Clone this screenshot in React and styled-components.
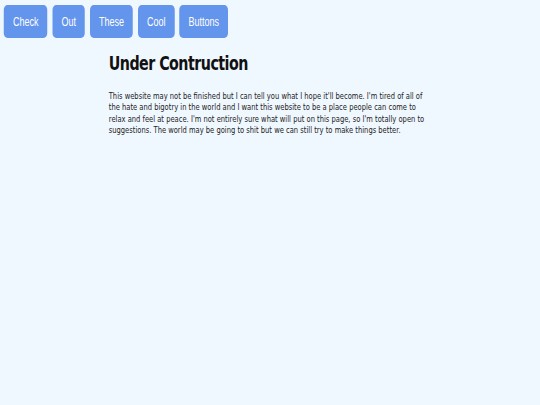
import styled, { createGlobalStyle } from "styled-components";

const GlobalStyle = createGlobalStyle`
    html, body {
        margin: 0;
        padding: 0;
        background-color: #f0f8ff;
        overflow: hidden;
    }
    body {
        min-height: 100vh;
    }
`;

const links = ["Check", "Out", "These", "Cool", "Buttons"];

export default function App() {
    return (
        <>
            <GlobalStyle />
            <SPage>
                <SNav>
                    {links.map((l) => (
                        <SButton key={l}>{l}</SButton>
                    ))}
                </SNav>
                <SMain>
                    <STitle>Under Contruction</STitle>
                    <SText>
                        This website may not be finished but I can tell you what I hope it'll become. I'm tired of all of
                        the hate and bigotry in the world and I want this website to be a place people can come to
                        relax and feel at peace. I'm not entirely sure what will put on this page, so I'm totally open to
                        suggestions. The world may be going to shit but we can still try to make things better.
                    </SText>
                </SMain>
            </SPage>
        </>
    );
}

// the screenshot is squeezed sideways, so the page is laid out wider and scaled
const SPage = styled.div`
    width: 720px;
    transform: scaleX(0.75);
    transform-origin: 0 0;
`;
const SNav = styled.nav`
    display: flex;
    gap: 6.7px;
    padding: 5px 5.3px 0;
`;
const SButton = styled.button`
    height: 33px;
    padding: 0 12px;
    border: none;
    border-radius: 5px;
    background-color: #6495ed;
    color: white;
    font-family: "Liberation Sans", Arial, sans-serif;
    font-size: 12px;
    cursor: pointer;
`;
const SMain = styled.main`
    width: 430px;
    margin: 0 auto;
    padding-top: 14px;
    font-family: "DejaVu Sans", Verdana, sans-serif;
`;
const STitle = styled.h1`
    margin: 0 0 17px;
    font-size: 19px;
    letter-spacing: -0.7px;
    font-weight: bold;
    color: #111;
`;
const SText = styled.p`
    margin: 0;
    font-size: 9px;
    line-height: 11.3px;
    color: #222;
`;
